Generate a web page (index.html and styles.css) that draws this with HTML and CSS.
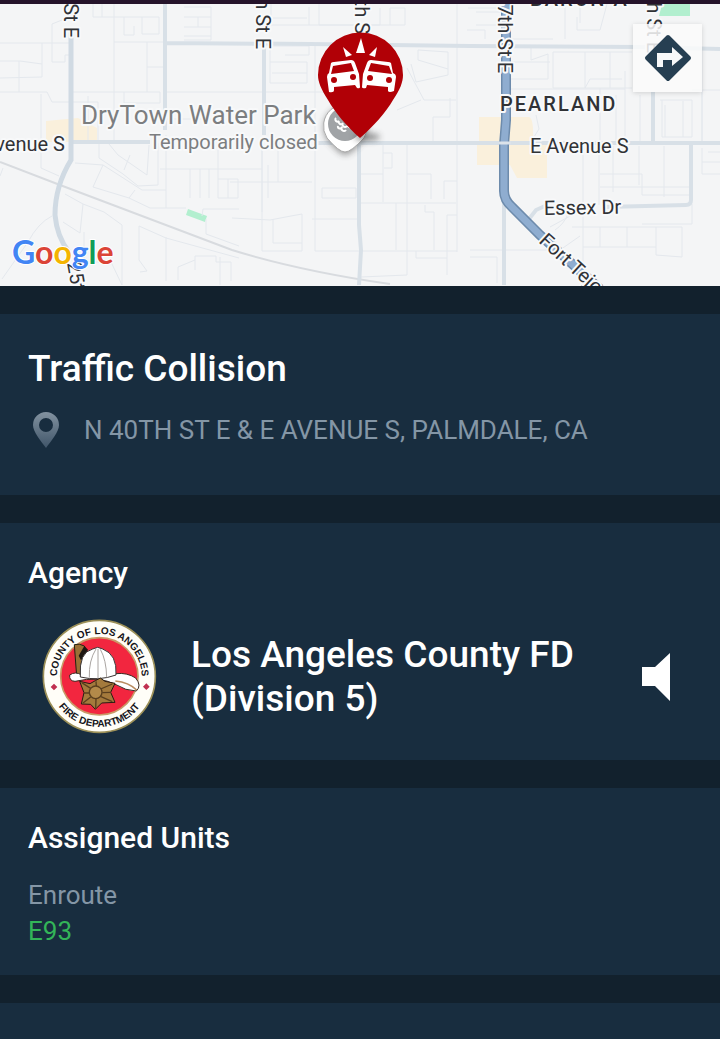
FILE: index.html
```
<!DOCTYPE html>
<html lang="en">
	<head>
		<meta charset="UTF-8">
		<meta name="viewport" content="width=device-width, initial-scale=1">
		<title>Traffic Collision</title>
		<link rel="stylesheet" href="styles.css">
	</head>
	<body>
		<div class="map">
			<svg class="map-canvas" viewBox="0 4 720 282" preserveAspectRatio="xMidYMid slice">
				<defs>
					<path id="fort" d="M538 242 L612 310"/>
					<filter id="soft" x="-50%" y="-100%" width="200%" height="300%"><feGaussianBlur stdDeviation="3"/></filter>
				</defs>
				<rect y="4" width="720" height="282" fill="#f4f5f6"/>
				<!-- areas -->
				<path class="area" d="M46 121 L78 118 L97 128 V142 H46 Z M479 117 H529 Q534 118 533 142 H547 V178 H517 L510 165 H477 V145 H479 Z"/>
				<path class="park" d="M188 209 L207 216 L205 222 L186 215 Z M662 4 H690 V16 H659 Z"/>
				<!-- local streets -->
				<g class="local">
					<path d="M0 43 H70 M52 62 V24 L62 20 M52 62 H65 V55 H70 M0 61 H20 L42 64 M0 78 L42 77 V43 M19 61 V92 M0 92 H47 L52 102 H70 M41 94 V168 L59 176"/>
					<path d="M93 4 V17 H102 V4 M102 17 H159 V34 H142 V17 M114 4 V142 M124 17 V35 H134 V26 M114 42 H165 M147 42 V92 M147 67 H165 M73 92 H160 V103 H124 V92 M73 102 H98 V142 M88 96 V142"/>
					<path d="M184 7 H211 V40 H184 M184 17 H211 M184 27 H211 M198 17 V27 M184 36 H211 M166 92 H262 M166 119 H230"/>
					<path d="M99 144 V158 L123 174 L138 186 L158 185 V143 M109 144 L118 155 L147 175 L149 145 M130 155 L124 170 M75 163 L103 165 L142 190 H166 M103 165 L93 187 L129 198 L135 190 M129 198 L150 208 H186"/>
					<path d="M166 135 V208 M160 169 H262 M190 169 V198 M200 169 V198 M209 169 V198 M218 150 V198 H238 V179 H218 M228 179 V198 M202 216 L203 209 H239 M206 219 V234 L239 246"/>
					<path d="M65 194 L83 204 L104 212 L122 225 V285 M83 204 L80 233 L63 222 M84 232 V262 H111 L122 285 M52 216 Q38 223 28 242 L2 279 M0 176 L3 168 M139 226 V260 L147 271 L140 272 M139 226 L166 238 L239 258 M166 237 V281 M178 280 V267 L195 260 V256 H216 V262 H231 V281 M195 260 V270 M220 257 V285"/>
					<path d="M271 4 V25 H309 V7 M273 18 H307 M309 25 H405 V8 H390 V25 M319 4 V25 H380 V8 M270 46 H309 V55 H285 M270 62 H307 V83 H270 V50 M272 73 H307 M262 92 H325 M315 45 V251 H457 M457 4 V252 M468 8 H500 M467 30 H485 V39"/>
					<path d="M418 50 L448 52 V75 L416 82 M418 50 V60 L448 69 M407 68 L424 100 H456 M411 64 L416 82 M421 100 L397 110 M450 98 V117 H433 V142"/>
					<path d="M262 148 V251 H302 V214 L291 216 L270 220 L232 218 M278 143 V182 H230 M268 165 V198 M278 182 H312 M322 188 H356 V198 H322 Z M273 219 V243 H302 M312 219 H360 M262 143 V212"/>
					<path d="M383 143 V202 M383 153 H392 V168 H384 M361 174 H383 M407 143 V275 L361 277 M407 174 H431 V199 M361 203 H456 M444 199 V181 H457 M396 203 V250 M425 205 V212 H434 V250 M447 275 V215 H457 M416 251 V258 H447"/>
					<path d="M476 25 H509 M476 12 H506 M565 4 V39 M553 39 H512 M577 17 V30 H600 L607 4 M580 4 V23 M509 40 V79 H548 V54 L531 60 M531 48 V60 M509 62 H550 M553 52 H632 M553 52 V88 H632 M585 52 V88 M610 52 V88 M509 89 H625 M625 71 V142 M585 88 L590 79 H622 M600 88 V142 M616 95 V142 M640 95 V142"/>
					<path d="M660 100 H692 V137 H662 V100 M665 105 V137 M683 101 V137 M692 90 H720 M702 50 V142 M702 90 V142 M536 115 L539 129 L532 140 M583 150 V285 M599 146 V205 M613 146 V192 M639 146 V185 M664 146 V197 M600 174 H642 V195 H690 M600 187 H690 M702 148 V174 H720 M702 162 H720 M708 152 H720"/>
					<path d="M572 227 H682 M600 227 V247 M627 227 V247 M656 227 V255 L682 257 V227 M583 247 H656 M692 204 V224 H642 M550 227 L572 215 M555 230 Q564 224 568 214 M470 250 H560 L580 236 M470 257 H497 V283"/>
				</g>
				<!-- railway -->
				<path class="rail" d="M0 162 L60 185 L232 250 Q300 271 390 284"/>
				<!-- main streets -->
				<path class="street" d="M165 4 V130 M165 43 L310 44 L470 46 L640 47 L720 49 M264 45 V135 M504 202 V285 M70 142 H150 M318 143 H720 M653 92 V143 M691 143 V200 Q691 205 686 205 L605 207 M529 219 L536 210 L545 206"/>
				<path class="street" d="M359 143 V225 L361 250 L359 285"/>
				<path class="street wide" d="M71 30 V160 Q55 186 55 215 Q57 237 69 252"/>
				<path class="road-edge" d="M506 4 V120 L504 145 V191 Q504 200 512 207 L540 235 L600 289"/>
				<path class="road" d="M506 4 V120 L504 145 V191 Q504 200 512 207 L540 235 L600 289"/>
				<path d="M499 143 H511" stroke="#dce3ea" stroke-width="3"/>
				<!-- labels -->
				<g class="label">
					<text x="81" y="124" class="poi">DryTown Water Park</text>
					<text x="149" y="149" class="poi-note">Temporarily closed</text>
					<text x="65" y="151" text-anchor="end">E Avenue S</text>
					<text x="530" y="153">E Avenue S</text>
					<text x="544" y="215" transform="rotate(-1 544 215)">Essex Dr</text>
					<text x="500" y="111" class="town">PEARLAND</text>
					<text x="530" y="6" class="town">BARON A</text>
					<text transform="translate(64 38) rotate(90)" text-anchor="end">25th St E</text>
					<text transform="translate(256 49) rotate(90)" text-anchor="end">35th St E</text>
					<text transform="translate(355 34) rotate(90)" text-anchor="end">40th S</text>
					<text transform="translate(498 73) rotate(90)" text-anchor="end">47th St E</text>
					<text transform="translate(647 53) rotate(90)" text-anchor="end">55th St E</text>
					<text transform="translate(67 263) rotate(80)">25th St E</text>
					<text><textPath href="#fort">Fort Tejon Rd</textPath></text>
				</g>
				<!-- water park marker -->
				<path d="M345 155 Q340 155 328 141 A22 22 0 1 1 363 141 Q351 155 345 155 Z" fill="#333" opacity=".45" filter="url(#soft)"/>
				<path d="M345 152 Q339 152 327 138 A22 22 0 1 1 364 138 Q351 152 345 152 Z" fill="#fff" stroke="#aaa"/>
				<circle cx="345" cy="124" r="17" fill="#a0a3a6"/>
				<path d="M336 118 a2 2 0 1 0 3 3 a2 2 0 1 0 4 2 a2 2 0 1 0 4 3 M338 126 a2 2 0 1 0 4 1 a2 2 0 1 0 4 3 M349 123 a2 2 0 1 0 2 4" fill="none" stroke="#fff" stroke-width="2"/>
				<!-- incident marker -->
				<ellipse cx="367" cy="137" rx="13" ry="4" fill="#333" opacity=".5" filter="url(#soft)"/>
				<path d="M360 138 C347 127 335 112 328 100 C321 89 318 82 318 75 A42 42 0 0 1 403 75 C403 82 400 90 393 100 C386 112 373 127 360 138 Z" fill="#b10006"/>
				<g fill="#fff">
					<path d="M361 38 L365 53 H356 Z M343 47 L352 55 L346 57 Z M377 47 L375 57 L369 55 Z"/>
					<path fill-rule="evenodd" d="M331 63 Q332 62 334 62 L351 60 Q354 60 355 63 L359 74 L360 87 Q360 89 357 88 L355 85 L334 87 V90 Q334 93 329 92 L327 77 Q327 74 329 73 Z M333 66 L331 74 L354 71 L351 63 Z"/>
					<path fill-rule="evenodd" d="M391 63 Q390 62 388 62 L371 60 Q368 60 367 63 L363 74 L362 87 Q362 89 366 88 L367 85 L388 87 V91 Q389 93 394 91 L396 77 Q396 74 393 73 Z M389 66 L392 74 L368 71 L371 63 Z"/>
				</g>
				<g fill="#b10006"><circle cx="334" cy="80" r="3"/><circle cx="353" cy="77" r="3"/><circle cx="370" cy="78" r="3"/><circle cx="389" cy="80" r="3"/></g>
				<text class="google" x="12" y="264"><tspan fill="#4285f4">G</tspan><tspan fill="#db4437">o</tspan><tspan fill="#f4b400">o</tspan><tspan fill="#4285f4">g</tspan><tspan fill="#0f9d58">l</tspan><tspan fill="#db4437">e</tspan></text>
			</svg>
			<button class="directions" type="button" aria-label="Directions">
				<svg width="48" height="48" viewBox="0 0 48 48">
					<path d="M24 3 L45 24 L24 45 L3 24 Z" fill="#263f52" stroke="#263f52" stroke-width="4" stroke-linejoin="round"/>
					<path d="M13 33 V19 H28 V13 L39 23 L28 32 V26 H19 V33 Z" fill="#f7f8f9"/>
				</svg>
			</button>
		</div>

		<div class="card incident">
			<h1>Traffic Collision</h1>
			<div class="address">
				<svg width="28" height="36" viewBox="0 0 28 36">
					<defs>
						<linearGradient id="pin" x1="0" y1="0" x2="0" y2="1">
							<stop offset="0" stop-color="#8292a0"/>
							<stop offset="1" stop-color="#405569"/>
						</linearGradient>
					</defs>
					<path d="M14 0 A13 13 0 0 1 27 13 C27 20 19 29 14 36 C9 29 1 20 1 13 A13 13 0 0 1 14 0 Z M14 6 A7 7 0 1 0 14 20 A7 7 0 1 0 14 6 Z" fill="url(#pin)" fill-rule="evenodd"/>
				</svg>
				<span>N 40TH ST E &amp; E AVENUE S, PALMDALE, CA</span>
			</div>
		</div>

		<div class="card agency">
			<h2>Agency</h2>
			<div class="agency-row">
				<svg class="seal" viewBox="20 20 345 345">
					<defs>
						<path id="sealTop" d="M66 208 A127 127 0 1 1 318 208"/>
						<path id="sealBottom" d="M40 192 A152 152 0 0 0 344 192"/>
					</defs>
					<circle cx="192" cy="192" r="168" fill="#fffef8" stroke="#9c9058" stroke-width="5"/>
					<circle cx="192" cy="192" r="116" fill="#f2263f" stroke="#c99a68" stroke-width="5"/>
					<text class="seal-text" text-anchor="middle"><textPath href="#sealTop" startOffset="50%">COUNTY OF LOS ANGELES</textPath></text>
					<text class="seal-text" text-anchor="middle"><textPath href="#sealBottom" startOffset="50%">FIRE DEPARTMENT</textPath></text>
					<path d="M56 214 l10 10 -10 10 -10 -10 Z M333 213 l10 10 -10 10 -10 -10 Z" fill="#c03050"/>
					<!-- helmet -->
					<path d="M117 97 Q132 92 147 101 L155 120 L138 152 L136 197 L124 192 Z" fill="#9a7136" stroke="#221" stroke-width="3"/>
					<path d="M147 101 L158 112 L138 145 L130 130 Z" fill="#1d1712"/>
					<path d="M103 188 Q120 176 139 188 Q190 200 242 184 Q275 180 301 197 Q320 220 303 236 Q270 235 242 217 Q190 190 119 207 Q101 206 103 188 Z" fill="#fff" stroke="#3a2a22" stroke-width="3"/>
					<path d="M135 194 Q130 119 172 110 L187 105 L202 110 Q246 126 242 188 Q190 207 135 194 Z" fill="#fff" stroke="#3a3535" stroke-width="3"/>
					<path d="M182 110 Q160 145 162 196 M188 110 V199 M195 111 Q213 143 214 195" fill="none" stroke="#aaa5a2" stroke-width="3"/>
					<path d="M240 206 Q280 210 304 233" fill="none" stroke="#b98d62" stroke-width="5"/>
					<!-- badge -->
					<path d="M133 207 L164 214 L180 205 L195 197 L209 207 L239 213 L226 240 L239 270 L199 272 L180 291 L166 276 L138 275 L146 241 Z" fill="#a47a3c" stroke="#281c12" stroke-width="3"/>
					<path d="M139 211 L166 228 M182 207 L183 221 M231 215 L196 230 M146 242 L162 242 M226 240 L201 241 M143 272 L166 254 M181 289 L182 260 M231 268 L197 253" stroke="#5a3f1e" stroke-width="4"/>
					<circle cx="181" cy="240" r="19" fill="#b38a4a" stroke="#5a3f1e" stroke-width="4"/>
				</svg>
				<div class="agency-name">Los Angeles County FD (Division 5)</div>
				<button class="listen" type="button" aria-label="Listen">
					<svg width="28" height="48" viewBox="0 0 28 48"><path d="M0 14 H13 L28 0 V48 L13 33 H0 Z" fill="#fff"/></svg>
				</button>
			</div>
		</div>

		<div class="card units">
			<h2>Assigned Units</h2>
			<div class="status">Enroute</div>
			<div class="unit">E93</div>
		</div>

		<div class="card"></div>
	</body>
</html>
```
FILE: styles.css
```
html, body{
	min-height: 100%;
}
body{
	margin: 0;
	box-sizing: border-box;
	min-height: 100vh;
	display: flex;
	flex-direction: column;
	gap: 28px;
	background: #12212d;
	border-top: solid 4px #25132a;
	color: #fff;
	font-family: Roboto, "Liberation Sans", sans-serif;
}
h1, h2{
	margin: 0;
	font-weight: 500;
}
button{
	border: none;
	padding: 0;
	cursor: pointer;
}
svg{
	display: block;
	flex-shrink: 0;
}

/* map */
.map{
	position: relative;
	overflow: hidden;
}
.map-canvas{
	width: 100%;
	height: 282px;
}
.area{
	fill: #faf0dc;
}
.park{
	fill: #b2efcf;
}
.local{
	fill: none;
	stroke: #e4e8ed;
	stroke-width: 1;
}
.rail{
	fill: none;
	stroke: #d8dbdf;
	stroke-width: 2;
}
.street{
	fill: none;
	stroke: #d8e0e7;
	stroke-width: 4;
}
.street.wide{
	stroke: #d0dae3;
	stroke-width: 5;
}
.road, .road-edge{
	fill: none;
	stroke: #8fadd0;
	stroke-width: 7;
}
.road-edge{
	stroke: #6d8bac;
	stroke-width: 10;
}
.label{
	font-size: 20px;
	fill: #303236;
	stroke: #f8f9fa;
	stroke-width: 4px;
	stroke-linejoin: round;
	paint-order: stroke;
}
.label .poi{
	font-size: 26px;
	fill: #7c7e80;
}
.label .poi-note{
	fill: #7c7e80;
}
.label .town{
	font-weight: 500;
	font-size: 20px;
	letter-spacing: 2px;
}
.google{
	font-family: Lato, sans-serif;
	font-weight: 700;
	font-size: 32px;
	stroke: #fff;
	stroke-width: 2px;
	paint-order: stroke;
}
.directions{
	position: absolute;
	top: 20px;
	right: 18px;
	width: 69px;
	height: 68px;
	display: flex;
	align-items: center;
	justify-content: center;
	background: rgba(250, 250, 250, .85);
	box-shadow: 0 1px 5px rgba(0, 0, 0, .15);
}

/* cards */
.card{
	box-sizing: border-box;
	padding: 32px 28px;
	background: #182d3f;
}
.card:last-child{
	flex: 1;
	padding: 0;
}
.card h1{
	font-size: 37px;
	line-height: 46px;
}
.card h2{
	font-size: 30px;
	line-height: 36px;
}
.incident{
	padding-bottom: 47px;
}
.address{
	display: flex;
	align-items: center;
	gap: 24px;
	margin-top: 20px;
	padding-left: 4px;
	font-size: 26px;
	line-height: 36px;
	color: #8496a6;
}
.agency{
	padding-bottom: 26px;
}
.agency-row{
	display: flex;
	align-items: center;
	margin-top: 28px;
	padding: 0 22px 0 14px;
}
.seal{
	width: 115px;
	height: 115px;
}
.seal-text{
	font-family: "Liberation Sans", sans-serif;
	font-size: 30px;
	font-weight: 700;
	fill: #15151a;
}
.agency-name{
	flex: 1;
	padding: 0 24px 0 34px;
	font-size: 37px;
	font-weight: 500;
	line-height: 44px;
}
.listen{
	background: none;
}
.units{
	padding-bottom: 26px;
}
.status, .unit{
	font-size: 26px;
	line-height: 36px;
}
.status{
	margin-top: 21px;
	color: #8496a6;
}
.unit{
	color: #33b558;
}
```
